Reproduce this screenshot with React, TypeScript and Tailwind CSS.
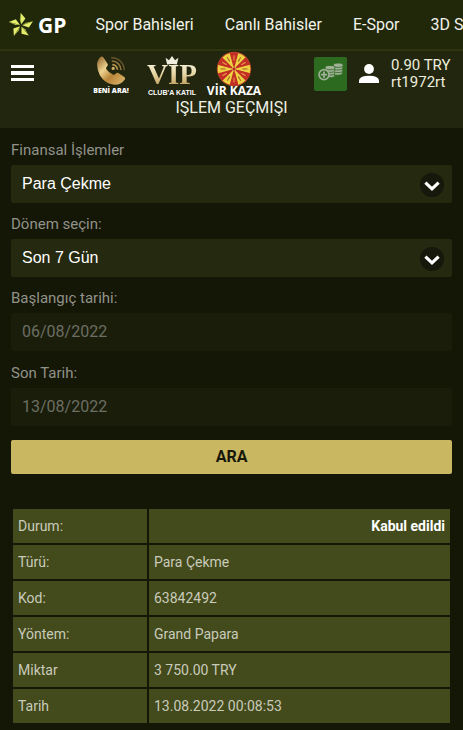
import { useState } from "react";
import type { ReactNode } from "react";

const navItems = ["Spor Bahisleri", "Canlı Bahisler", "E-Spor", "3D Sporlar"];

const details = [
  { label: "Durum:", value: "Kabul edildi", status: true },
  { label: "Türü:", value: "Para Çekme" },
  { label: "Kod:", value: "63842492" },
  { label: "Yöntem:", value: "Grand Papara" },
  { label: "Miktar", value: "3 750.00 TRY" },
  { label: "Tarih", value: "13.08.2022 00:08:53" },
];

function Logo() {
  return (
    <a href="#" className="flex shrink-0 items-center gap-1 text-white" aria-label="GP">
      <svg viewBox="0 0 26 26" className="h-[26px] w-[26px]" aria-hidden="true">
        {[0, 72, 144, 216, 288].map((angle) => (
          <g key={angle} transform={`rotate(${angle} 13 13.5)`}>
            <path d="M13.2 12.4 L12.6 0.8 L17.4 6.6 Z" fill="#e4ee6c" />
            <path d="M13.2 12.4 L12.6 0.8 L11.8 8 Z" fill="#a9bb46" />
          </g>
        ))}
      </svg>
      <span className="font-['Open_Sans',sans-serif] text-[21px] leading-6 font-bold">GP</span>
    </a>
  );
}

function PhoneIcon() {
  return (
    <svg viewBox="0 0 30 30" className="h-[30px] w-[30px]" fill="none" aria-hidden="true">
      <defs>
        <linearGradient id="gold" x1="0" y1="0" x2="1" y2="1">
          <stop offset="0" stopColor="#8a5a20" />
          <stop offset="0.35" stopColor="#edd391" />
          <stop offset="0.6" stopColor="#b98437" />
          <stop offset="1" stopColor="#dfbb72" />
        </linearGradient>
      </defs>
      <path
        d="M4.4 1 Q6.4 -0.2 7.6 1.8 L11.4 7.4 Q12.4 9.2 10.9 10.6 Q9.6 12 10.6 13.6 Q13 17 16.8 18.6 Q18.4 19.2 19.6 17.7 Q21 16.2 22.8 17.3 L28 20.8 Q29.8 22 28.6 23.8 Q24.4 29.6 17 28.6 Q8.6 27 4 19.4 Q-2 7.4 4.4 1 Z"
        fill="url(#gold)"
      />
      <circle cx="17.2" cy="12.4" r="1.6" fill="#cfae66" />
      <path d="M16.3 8.6 A5 5 0 0 1 21.4 13.8" stroke="#b9964f" strokeWidth="1.6" />
      <path d="M15.8 5 A9 9 0 0 1 24.9 14" stroke="#947640" strokeWidth="1.5" />
      <path d="M15.2 1.7 A12.5 12.5 0 0 1 28.2 14.3" stroke="#6b552a" strokeWidth="1.4" />
    </svg>
  );
}

function CrownIcon() {
  return (
    <svg viewBox="0 0 12 8" className="h-[9px] w-[14px] shrink-0" fill="#f1eee0" aria-hidden="true">
      <path d="M0.3 1.6 L3.3 3.8 L6 0 L8.7 3.8 L11.7 1.6 L10.3 7.6 Q6 6.4 1.7 7.6 Z" />
    </svg>
  );
}

function WheelIcon() {
  return (
    <svg viewBox="0 0 36 36" className="h-9 w-9" aria-hidden="true">
      <circle cx="18" cy="18" r="17.2" fill="#b4432a" />
      {[0, 1, 2, 3, 4, 5, 6, 7, 8, 9, 10, 11].map((n) => (
        <g key={n} transform={`rotate(${n * 30} 18 18)`}>
          <path d="M18 18 L13.8 2.2 A16.3 16.3 0 0 1 22.2 2.2 Z" fill={n % 2 ? "#efd040" : "#c42d26"} />
          <path d="M18 4.5 V9.5" stroke={n % 2 ? "#a06a28" : "#e59a45"} strokeWidth="1.1" />
        </g>
      ))}
      <circle cx="18" cy="18" r="2" fill="#b22b20" stroke="#e9b955" strokeWidth="0.8" />
    </svg>
  );
}

function CoinsIcon() {
  return (
    <svg viewBox="0 0 26 20" className="h-5 w-[26px]" aria-hidden="true">
      <g fill="#9fb096" stroke="#2c6a20" strokeWidth="0.8">
        {[12, 9.4, 6.8, 4.2].map((y) => (
          <ellipse key={y} cx={20.6 - y / 12} cy={y - 1} rx="4.9" ry="2.2" />
        ))}
        {[14.6, 12, 9.4, 6.8].map((y) => (
          <ellipse key={y} cx={12.4 - y / 20} cy={y - 1.2} rx="5" ry="2.2" />
        ))}
      </g>
      <circle cx="6" cy="12.6" r="5" fill="#2c6a20" stroke="#9fb096" strokeWidth="1.6" />
      <path d="M6 9.4 V15.8 M2.8 12.6 H9.2" stroke="#9fb096" strokeWidth="1.8" />
    </svg>
  );
}

function Field({ id, label, children }: { id: string; label: string; children: ReactNode }) {
  return (
    <div className="flex flex-col gap-[5px]">
      <label htmlFor={id} className="text-[15px] leading-5 text-[#91928a]">
        {label}
      </label>
      {children}
    </div>
  );
}

function SelectField({ id, label, options }: { id: string; label: string; options: string[] }) {
  const [value, setValue] = useState(options[0]);

  return (
    <Field id={id} label={label}>
      <div className="relative">
        <select
          id={id}
          value={value}
          onChange={(event) => setValue(event.target.value)}
          className="block h-[38px] w-full appearance-none rounded-xs bg-[#24290f] px-[11px] font-['Liberation_Sans',sans-serif] text-base text-white"
        >
          {options.map((option) => (
            <option key={option}>{option}</option>
          ))}
        </select>
        <svg viewBox="0 0 24 24" className="pointer-events-none absolute top-2 right-2 h-6 w-6" aria-hidden="true">
          <circle cx="12" cy="12" r="12" fill="#15180a" />
          <path d="M5.4 9.6 L12 15.8 L18.6 9.6" fill="none" stroke="#fff" strokeWidth="3.2" />
        </svg>
      </div>
    </Field>
  );
}

function DateField({ id, label, value }: { id: string; label: string; value: string }) {
  return (
    <Field id={id} label={label}>
      <input
        id={id}
        type="text"
        value={value}
        disabled
        readOnly
        className="h-[38px] w-full rounded-xs bg-[#1a1d0a] px-[11px] pb-[2px] text-base text-[#6c6e63]"
      />
    </Field>
  );
}

export default function App() {
  return (
    <div className="min-h-screen overflow-hidden bg-[#141606] font-[Roboto,sans-serif] text-white">
      <nav className="flex h-[51px] items-center overflow-hidden border-b-2 border-[#2e3610] bg-[#212709] pl-2">
        <Logo />
        <div className="ml-[29px] flex gap-[31px]">
          {navItems.map((item) => (
            <a key={item} href="#" className="text-base whitespace-nowrap text-[#f2f3ec]">
              {item}
            </a>
          ))}
        </div>
      </nav>

      <header className="bg-[#22260e] pb-[10px]">
        <div className="flex h-[47px] items-start justify-between px-[11px]">
          <div className="flex">
            <button type="button" aria-label="Menü" className="mt-[14px] flex w-[23px] flex-col gap-[3px]">
              <span className="h-[3px] w-full bg-white" />
              <span className="h-[4px] w-full bg-white" />
              <span className="h-[3px] w-full bg-white" />
            </button>
            <div className="ml-[58px] flex gap-[9px] leading-none font-bold">
              <a href="#" className="flex w-[38px] flex-col items-center pt-[5px]">
                <PhoneIcon />
                <span className="font-['Open_Sans',sans-serif] text-[7px] leading-[9px] font-extrabold whitespace-nowrap">BENİ ARA!</span>
              </a>
              <a href="#" className="flex w-[66px] flex-col items-center pt-[5px]">
                <CrownIcon />
                <span className="-mt-[5px] bg-linear-to-b from-[#fffbe9] via-[#e5d6a4] to-[#b9954f] bg-clip-text font-['Liberation_Serif',serif] text-[29px] leading-[28px] text-transparent">
                  VIP
                </span>
                <span className="font-['Liberation_Sans',sans-serif] text-[7px] leading-[9px] whitespace-nowrap">CLUB'A KATIL</span>
              </a>
              <a href="#" className="-ml-[7px] flex w-[54px] flex-col items-center">
                <WheelIcon />
                <span className="-mt-[3px] font-['Open_Sans',sans-serif] text-xs leading-[14px] whitespace-nowrap">VİR KAZA</span>
              </a>
            </div>
          </div>
          <div className="flex pt-[6px]">
            <button type="button" aria-label="Para yatır" className="flex h-[34px] w-[33px] justify-center rounded-xs bg-[#2c6a20] pt-[5px]">
              <CoinsIcon />
            </button>
            <a href="#" className="ml-3 flex gap-3">
              <svg viewBox="0 0 20 20" className="mt-[7px] h-5 w-5" fill="#fff" aria-hidden="true">
                <circle cx="10" cy="5" r="4.9" />
                <path d="M0 19 V16.6 Q0.4 11.8 10 11.8 Q19.6 11.8 20 16.6 V19 Z" />
              </svg>
              <span className="flex w-[61px] flex-col text-[15px] leading-[17px] whitespace-nowrap text-[#eceddf]">
                <span>0.90 TRY</span>
                <span>rt1972rt</span>
              </span>
            </a>
          </div>
        </div>
        <h1 className="text-center text-base leading-5 text-[#eeefe6]">IŞLEM GEÇMIŞI</h1>
      </header>

      <main className="px-[11px] pt-3 pb-[5px]">
        <form onSubmit={(event) => event.preventDefault()}>
          <div className="flex flex-col gap-[11px]">
            <SelectField id="islem" label="Finansal İşlemler" options={["Para Çekme", "Para Yatırma"]} />
            <SelectField id="donem" label="Dönem seçin:" options={["Son 7 Gün", "Son 30 Gün"]} />
            <div className="flex flex-col gap-3">
              <DateField id="baslangic" label="Başlangıç tarihi:" value="06/08/2022" />
              <DateField id="bitis" label="Son Tarih:" value="13/08/2022" />
            </div>
          </div>
          <button type="submit" className="mt-[14px] h-[34px] w-full rounded-xs bg-[#c9b762] text-base font-bold text-[#17180a]">
            ARA
          </button>
        </form>

        <table className="mt-[33px] w-full border-separate border-spacing-[2px] text-sm text-[#c9cbbb]">
          <tbody>
            {details.map((row) => (
              <tr key={row.label} className="h-[34px]">
                <th scope="row" className="w-[134px] bg-[#434a1c] px-[5px] text-left font-normal">
                  {row.label}
                </th>
                <td className={row.status ? "bg-[#434a1c] px-[5px] text-right font-bold text-white" : "bg-[#434a1c] px-[5px]"}>
                  {row.value}
                </td>
              </tr>
            ))}
          </tbody>
        </table>
      </main>
    </div>
  );
}
